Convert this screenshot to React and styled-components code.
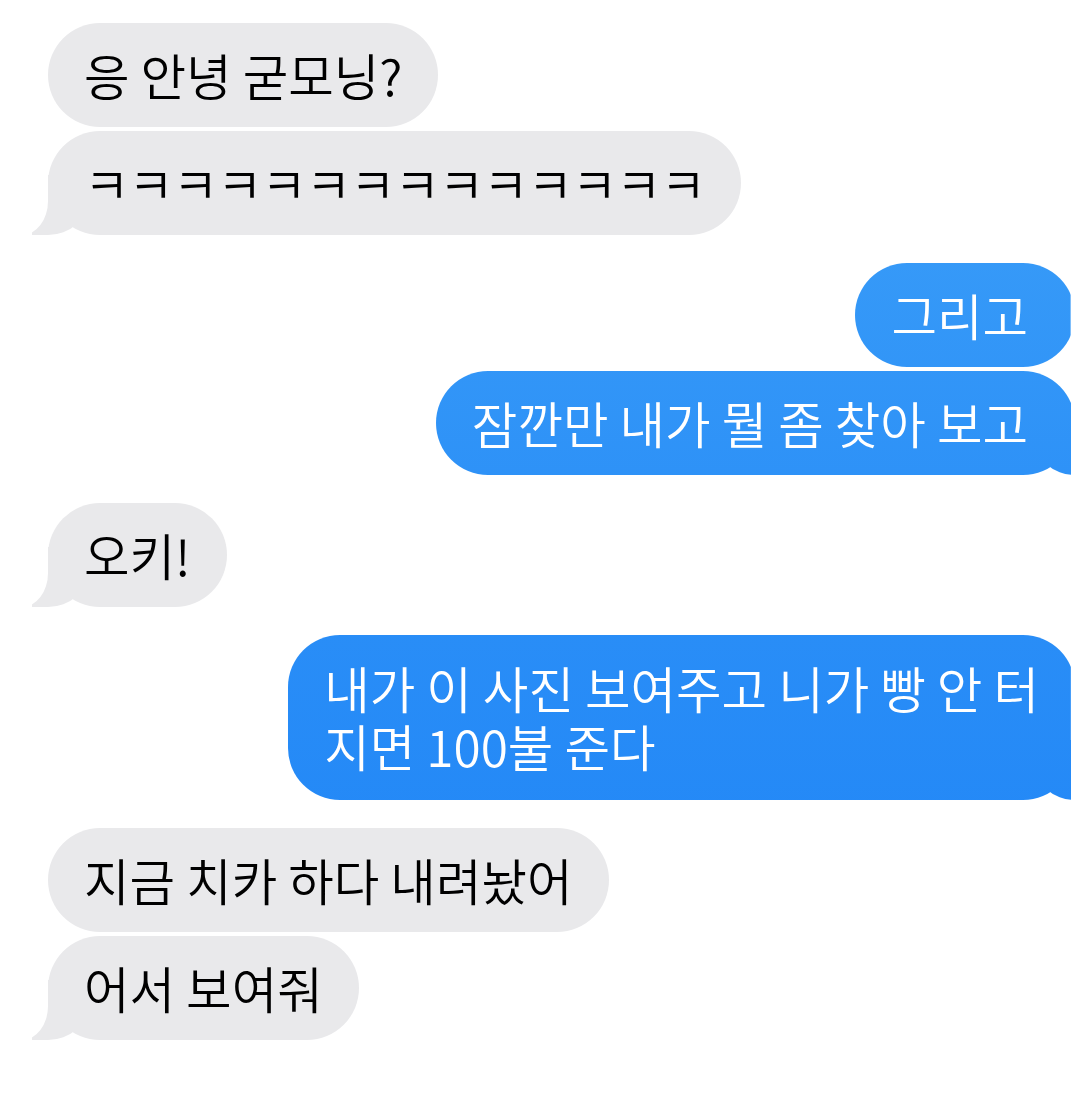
import React from "react";
import styled, { createGlobalStyle, css } from "styled-components";

const GlobalStyle = createGlobalStyle`
  html, body {
    margin: 0;
    padding: 0;
    background: #ffffff;
    overflow: hidden;
  }
  body {
    font-family: "Noto Sans CJK KR", "Noto Sans", sans-serif;
  }
`;

const GRAY = "#e9e9eb";
const BLUE = css`
  background: linear-gradient(180deg, #3fa2f8 0%, #2b8ff7 50%, #1c82f6 100%);
  background-attachment: fixed;
`;

const messages = [
  { from: "them", lines: ["응 안녕 굳모닝?"] },
  { from: "them", lines: ["ㅋㅋㅋㅋㅋㅋㅋㅋㅋㅋㅋㅋㅋㅋ"], tail: true, tight: true },
  { from: "me", lines: ["그리고"] },
  { from: "me", lines: ["잠깐만 내가 뭘 좀 찾아 보고"], tail: true },
  { from: "them", lines: ["오키!"], tail: true },
  { from: "me", lines: ["내가 이 사진 보여주고 니가 빵 안 터", "지면 100불 준다"], tail: true },
  { from: "them", lines: ["지금 치카 하다 내려놨어"] },
  { from: "them", lines: ["어서 보여줘"], tail: true },
];

// group consecutive messages from same sender
const groups = messages.reduce((acc, m) => {
  const last = acc[acc.length - 1];
  if (last && last.from === m.from) last.items.push(m);
  else acc.push({ from: m.from, items: [m] });
  return acc;
}, []);

const App = () => {
  return (
    <>
      <GlobalStyle />
      <Thread>
        {groups.map((g, gi) => (
          <Group key={gi} $me={g.from === "me"}>
            {g.items.map((m, i) => (
              <Bubble
                key={i}
                $me={m.from === "me"}
                $tail={m.tail}
                $multi={m.lines.length > 1}
                $tight={m.tight}
              >
                {m.lines.map((l, li) => (
                  <Line key={li}>{l}</Line>
                ))}
              </Bubble>
            ))}
          </Group>
        ))}
      </Thread>
    </>
  );
};

const Thread = styled.div`
  display: flex;
  flex-direction: column;
  gap: 28px;
  padding: 23px 0 0 48px;
  margin-right: -4px;
  height: 1093px;
`;

const Group = styled.div`
  display: flex;
  flex-direction: column;
  gap: 4px;
  align-items: ${p => (p.$me ? "flex-end" : "flex-start")};
`;

const Line = styled.span`
  display: block;
  white-space: pre;
`;

const themTail = css`
  &::before {
    content: "";
    position: absolute;
    bottom: 0;
    left: -16px;
    width: 56px;
    height: 60px;
    background: ${GRAY};
    border-bottom-right-radius: 40px 36px;
    z-index: -1;
  }
  &::after {
    content: "";
    position: absolute;
    bottom: 0;
    left: -60px;
    width: 60px;
    height: 60px;
    background: #ffffff;
    border-bottom-right-radius: 26px 34px;
    z-index: -1;
  }
`;

const meTail = css`
  &::before {
    content: "";
    position: absolute;
    bottom: 0;
    right: -16px;
    width: 56px;
    height: 60px;
    ${BLUE};
    border-bottom-left-radius: 40px 36px;
    z-index: -1;
  }
  &::after {
    content: "";
    position: absolute;
    bottom: 0;
    right: -60px;
    width: 60px;
    height: 60px;
    background: #ffffff;
    border-bottom-left-radius: 26px 34px;
    z-index: -1;
  }
`;

const Bubble = styled.div`
  position: relative;
  z-index: 0;
  isolation: isolate;
  padding: 23px 36px;
  border-radius: 52px;
  font-size: 49.5px;
  line-height: 58px;
  font-weight: 350;
  letter-spacing: ${p => (p.$tight ? "-1.2px" : "0")};
  color: ${p => (p.$me ? "#ffffff" : "#000000")};
  ${p => (p.$me ? BLUE : css`background: ${GRAY};`)}
  ${p => p.$me && css`padding-right: ${p.$multi ? "36px" : "47px"};`}
  ${p => p.$multi && css`padding-top: 24px; padding-bottom: 25px;`}
  ${p => p.$tail && (p.$me ? meTail : themTail)}
`;

export default App;
